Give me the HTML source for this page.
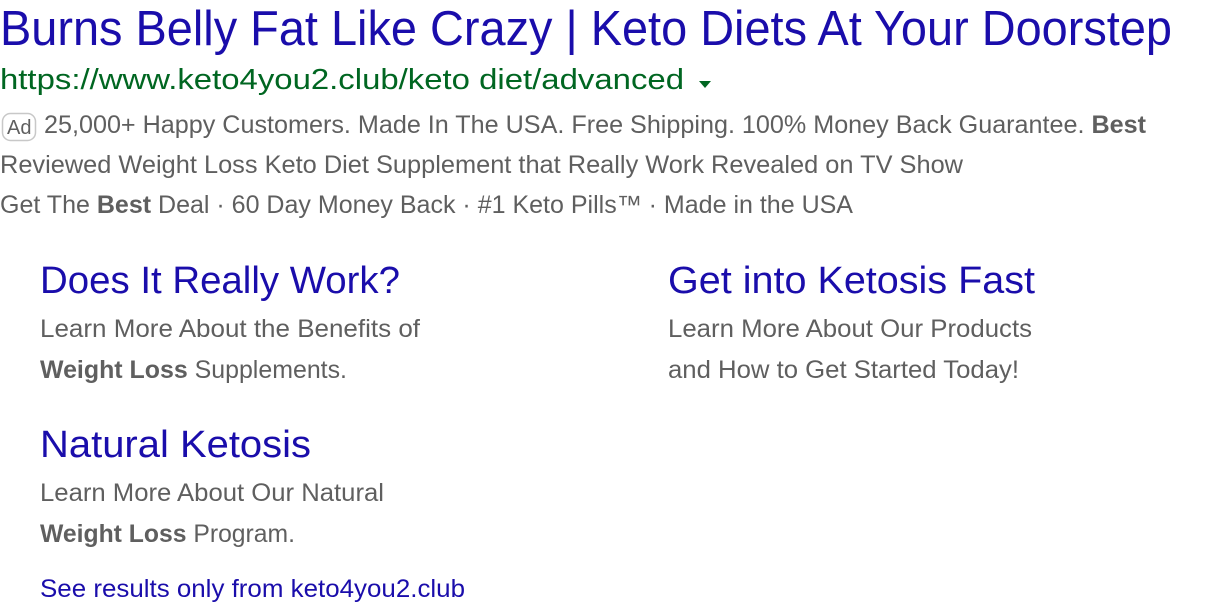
<!DOCTYPE html>
<html><head><meta charset="utf-8"><style>
html,body{margin:0;padding:0;background:#fff;width:1216px;height:612px;overflow:hidden}
svg{display:block}
text{font-family:"Liberation Sans",Arial,sans-serif}
.t{fill:#1a0dab}.g{fill:#5f5f5f}.u{fill:#006621}
</style></head><body>
<svg width="1216" height="612" viewBox="0 0 1216 612">
<text class="t" x="0" y="45" font-size="49" textLength="1172" lengthAdjust="spacingAndGlyphs">Burns Belly Fat Like Crazy | Keto Diets At Your Doorstep</text>
<text class="u" x="0" y="89" font-size="29" textLength="684" lengthAdjust="spacingAndGlyphs">https://www.keto4you2.club/keto diet/advanced</text>
<path d="M699 81 L711 81 L705 88 Z" fill="#006621"/>
<rect x="2.5" y="113.5" width="33" height="27" rx="8" fill="none" stroke="#c8c8c8" stroke-width="1.5"/>
<text class="g" x="7" y="134" font-size="20">Ad</text>
<text class="g" x="44" y="133" font-size="25" textLength="1102" lengthAdjust="spacingAndGlyphs">25,000+ Happy Customers. Made In The USA. Free Shipping. 100% Money Back Guarantee. <tspan font-weight="bold">Best</tspan></text>
<text class="g" x="0" y="173" font-size="25" textLength="963" lengthAdjust="spacingAndGlyphs">Reviewed Weight Loss Keto Diet Supplement that Really Work Revealed on TV Show</text>
<text class="g" x="0" y="213" font-size="25" textLength="853" lengthAdjust="spacingAndGlyphs">Get The <tspan font-weight="bold">Best</tspan> Deal · 60 Day Money Back · #1 Keto Pills™ · Made in the USA</text>

<text class="t" x="40" y="293" font-size="38" textLength="360" lengthAdjust="spacingAndGlyphs">Does It Really Work?</text>
<text class="g" x="40" y="337" font-size="25" textLength="380" lengthAdjust="spacingAndGlyphs">Learn More About the Benefits of</text>
<text class="g" x="40" y="378" font-size="25" textLength="307" lengthAdjust="spacingAndGlyphs"><tspan font-weight="bold">Weight Loss</tspan> Supplements.</text>

<text class="t" x="668" y="293" font-size="38" textLength="367" lengthAdjust="spacingAndGlyphs">Get into Ketosis Fast</text>
<text class="g" x="668" y="337" font-size="25" textLength="364" lengthAdjust="spacingAndGlyphs">Learn More About Our Products</text>
<text class="g" x="668" y="378" font-size="25" textLength="351" lengthAdjust="spacingAndGlyphs">and How to Get Started Today!</text>

<text class="t" x="40" y="457" font-size="38" textLength="271" lengthAdjust="spacingAndGlyphs">Natural Ketosis</text>
<text class="g" x="40" y="501" font-size="25" textLength="344" lengthAdjust="spacingAndGlyphs">Learn More About Our Natural</text>
<text class="g" x="40" y="542" font-size="25" textLength="255" lengthAdjust="spacingAndGlyphs"><tspan font-weight="bold">Weight Loss</tspan> Program.</text>

<text class="t" x="40" y="597" font-size="25" textLength="425" lengthAdjust="spacingAndGlyphs">See results only from keto4you2.club</text>
</svg>
</body></html>
